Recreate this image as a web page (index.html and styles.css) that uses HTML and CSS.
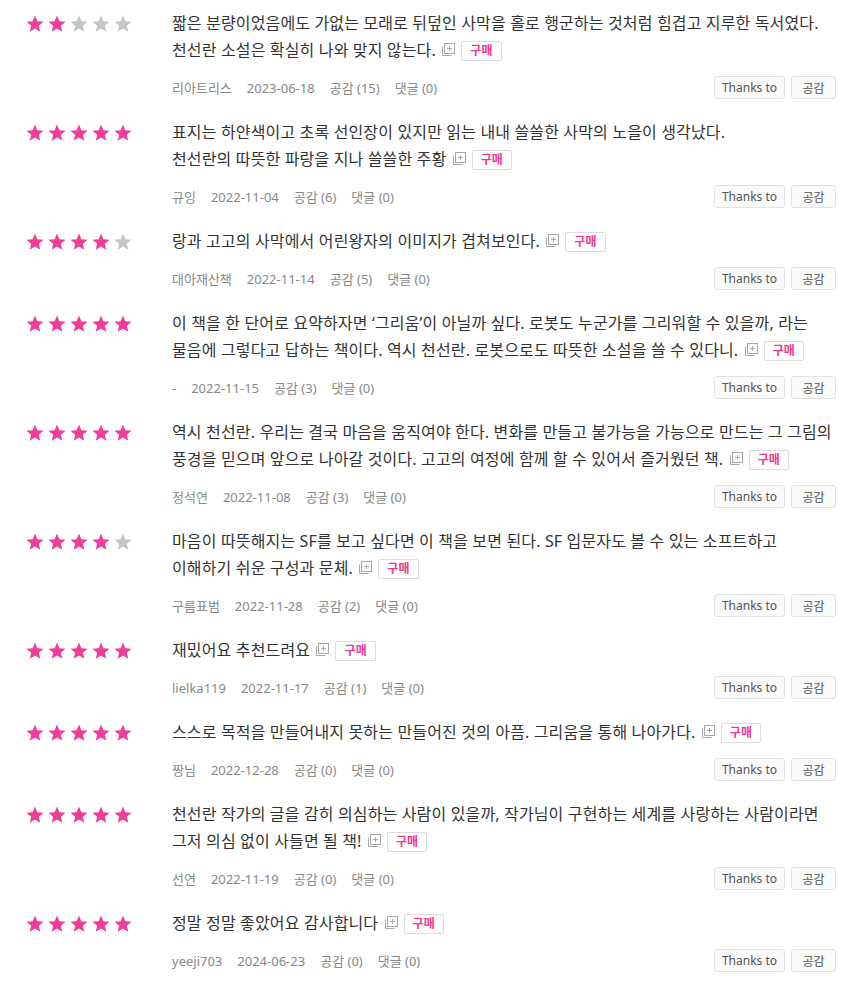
FILE: index.html
```html
<!DOCTYPE html>
<html lang="ko">

    <head>
        <meta charset="UTF-8">
        <meta name="viewport" content="width=device-width, initial-scale=1.0">
        <title>Reviews</title>
        <link rel="stylesheet" href="styles.css">
    </head>

    <body>
        <!-- star / icon sprites -->
        <svg class="sprite">
            <symbol id="star" viewBox="0 0 20 20">
                <polygon points="10,0.5 12.65,6.86 19.51,7.41 14.28,11.89 15.88,18.59 10,15 4.12,18.59 5.72,11.89 0.49,7.41 7.35,6.86" />
            </symbol>
            <symbol id="more" viewBox="0 0 14 14">
                <rect x="3.5" y="0.5" width="10" height="10" fill="none" stroke="currentColor" />
                <path d="M8.5 3v5M6 5.5h5" stroke="currentColor" />
                <path d="M1.5 3.5v9h9" fill="none" stroke="currentColor" />
            </symbol>
        </svg>

        <ul class="reviews">
            <li class="review">
                <div class="stars">
                    <svg class="on"><use href="#star" /></svg><svg class="on"><use href="#star" /></svg><svg><use href="#star" /></svg><svg><use href="#star" /></svg><svg><use href="#star" /></svg>
                </div>
                <div class="body">
                    <p class="text">짧은 분량이었음에도 가없는 모래로 뒤덮인 사막을 홀로 행군하는 것처럼 힘겹고 지루한 독서였다.<br>천선란 소설은 확실히 나와 맞지 않는다. <svg class="more"><use href="#more" /></svg><span class="buy">구매</span></p>
                    <div class="meta">
                        <span>리아트리스</span><span>2023-06-18</span><span>공감 (15)</span><span>댓글 (0)</span>
                        <div class="actions"><button>Thanks to</button><button>공감</button></div>
                    </div>
                </div>
            </li>

            <li class="review">
                <div class="stars">
                    <svg class="on"><use href="#star" /></svg><svg class="on"><use href="#star" /></svg><svg class="on"><use href="#star" /></svg><svg class="on"><use href="#star" /></svg><svg class="on"><use href="#star" /></svg>
                </div>
                <div class="body">
                    <p class="text">표지는 하얀색이고 초록 선인장이 있지만 읽는 내내 쓸쓸한 사막의 노을이 생각났다.<br>천선란의 따뜻한 파랑을 지나 쓸쓸한 주황 <svg class="more"><use href="#more" /></svg><span class="buy">구매</span></p>
                    <div class="meta">
                        <span>규잉</span><span>2022-11-04</span><span>공감 (6)</span><span>댓글 (0)</span>
                        <div class="actions"><button>Thanks to</button><button>공감</button></div>
                    </div>
                </div>
            </li>

            <li class="review">
                <div class="stars">
                    <svg class="on"><use href="#star" /></svg><svg class="on"><use href="#star" /></svg><svg class="on"><use href="#star" /></svg><svg class="on"><use href="#star" /></svg><svg><use href="#star" /></svg>
                </div>
                <div class="body">
                    <p class="text">랑과 고고의 사막에서 어린왕자의 이미지가 겹쳐보인다. <svg class="more"><use href="#more" /></svg><span class="buy">구매</span></p>
                    <div class="meta">
                        <span>대아재산책</span><span>2022-11-14</span><span>공감 (5)</span><span>댓글 (0)</span>
                        <div class="actions"><button>Thanks to</button><button>공감</button></div>
                    </div>
                </div>
            </li>

            <li class="review">
                <div class="stars">
                    <svg class="on"><use href="#star" /></svg><svg class="on"><use href="#star" /></svg><svg class="on"><use href="#star" /></svg><svg class="on"><use href="#star" /></svg><svg class="on"><use href="#star" /></svg>
                </div>
                <div class="body">
                    <p class="text">이 책을 한 단어로 요약하자면 ‘그리움’이 아닐까 싶다. 로봇도 누군가를 그리워할 수 있을까, 라는<br>물음에 그렇다고 답하는 책이다. 역시 천선란. 로봇으로도 따뜻한 소설을 쓸 수 있다니. <svg class="more"><use href="#more" /></svg><span class="buy">구매</span></p>
                    <div class="meta">
                        <span>-</span><span>2022-11-15</span><span>공감 (3)</span><span>댓글 (0)</span>
                        <div class="actions"><button>Thanks to</button><button>공감</button></div>
                    </div>
                </div>
            </li>

            <li class="review">
                <div class="stars">
                    <svg class="on"><use href="#star" /></svg><svg class="on"><use href="#star" /></svg><svg class="on"><use href="#star" /></svg><svg class="on"><use href="#star" /></svg><svg class="on"><use href="#star" /></svg>
                </div>
                <div class="body">
                    <p class="text">역시 천선란. 우리는 결국 마음을 움직여야 한다. 변화를 만들고 불가능을 가능으로 만드는 그 그림의<br>풍경을 믿으며 앞으로 나아갈 것이다. 고고의 여정에 함께 할 수 있어서 즐거웠던 책. <svg class="more"><use href="#more" /></svg><span class="buy">구매</span></p>
                    <div class="meta">
                        <span>정석연</span><span>2022-11-08</span><span>공감 (3)</span><span>댓글 (0)</span>
                        <div class="actions"><button>Thanks to</button><button>공감</button></div>
                    </div>
                </div>
            </li>

            <li class="review">
                <div class="stars">
                    <svg class="on"><use href="#star" /></svg><svg class="on"><use href="#star" /></svg><svg class="on"><use href="#star" /></svg><svg class="on"><use href="#star" /></svg><svg><use href="#star" /></svg>
                </div>
                <div class="body">
                    <p class="text">마음이 따뜻해지는 SF를 보고 싶다면 이 책을 보면 된다. SF 입문자도 볼 수 있는 소프트하고<br>이해하기 쉬운 구성과 문체. <svg class="more"><use href="#more" /></svg><span class="buy">구매</span></p>
                    <div class="meta">
                        <span>구름표범</span><span>2022-11-28</span><span>공감 (2)</span><span>댓글 (0)</span>
                        <div class="actions"><button>Thanks to</button><button>공감</button></div>
                    </div>
                </div>
            </li>

            <li class="review">
                <div class="stars">
                    <svg class="on"><use href="#star" /></svg><svg class="on"><use href="#star" /></svg><svg class="on"><use href="#star" /></svg><svg class="on"><use href="#star" /></svg><svg class="on"><use href="#star" /></svg>
                </div>
                <div class="body">
                    <p class="text">재밌어요 추천드려요 <svg class="more"><use href="#more" /></svg><span class="buy">구매</span></p>
                    <div class="meta">
                        <span>lielka119</span><span>2022-11-17</span><span>공감 (1)</span><span>댓글 (0)</span>
                        <div class="actions"><button>Thanks to</button><button>공감</button></div>
                    </div>
                </div>
            </li>

            <li class="review">
                <div class="stars">
                    <svg class="on"><use href="#star" /></svg><svg class="on"><use href="#star" /></svg><svg class="on"><use href="#star" /></svg><svg class="on"><use href="#star" /></svg><svg class="on"><use href="#star" /></svg>
                </div>
                <div class="body">
                    <p class="text">스스로 목적을 만들어내지 못하는 만들어진 것의 아픔. 그리움을 통해 나아가다. <svg class="more"><use href="#more" /></svg><span class="buy">구매</span></p>
                    <div class="meta">
                        <span>짱님</span><span>2022-12-28</span><span>공감 (0)</span><span>댓글 (0)</span>
                        <div class="actions"><button>Thanks to</button><button>공감</button></div>
                    </div>
                </div>
            </li>

            <li class="review">
                <div class="stars">
                    <svg class="on"><use href="#star" /></svg><svg class="on"><use href="#star" /></svg><svg class="on"><use href="#star" /></svg><svg class="on"><use href="#star" /></svg><svg class="on"><use href="#star" /></svg>
                </div>
                <div class="body">
                    <p class="text">천선란 작가의 글을 감히 의심하는 사람이 있을까, 작가님이 구현하는 세계를 사랑하는 사람이라면<br>그저 의심 없이 사들면 될 책! <svg class="more"><use href="#more" /></svg><span class="buy">구매</span></p>
                    <div class="meta">
                        <span>선연</span><span>2022-11-19</span><span>공감 (0)</span><span>댓글 (0)</span>
                        <div class="actions"><button>Thanks to</button><button>공감</button></div>
                    </div>
                </div>
            </li>

            <li class="review">
                <div class="stars">
                    <svg class="on"><use href="#star" /></svg><svg class="on"><use href="#star" /></svg><svg class="on"><use href="#star" /></svg><svg class="on"><use href="#star" /></svg><svg class="on"><use href="#star" /></svg>
                </div>
                <div class="body">
                    <p class="text">정말 정말 좋았어요 감사합니다 <svg class="more"><use href="#more" /></svg><span class="buy">구매</span></p>
                    <div class="meta">
                        <span>yeeji703</span><span>2024-06-23</span><span>공감 (0)</span><span>댓글 (0)</span>
                        <div class="actions"><button>Thanks to</button><button>공감</button></div>
                    </div>
                </div>
            </li>
        </ul>
    </body>

</html>
```

FILE: styles.css
```css
body {
    margin: 0;
    background-color: #fff;
    font-family: "Noto Sans", "Noto Sans CJK KR", sans-serif;
    color: #333;
}

.sprite {
    position: absolute;
    width: 0;
    height: 0;
    overflow: hidden;
}

.reviews {
    list-style: none;
    margin: 0;
    padding: 0 17px 0 26px;
}

.review {
    display: flex;
    padding: 10px 0;
}

.stars {
    display: flex;
    align-items: center;
    gap: 4px;
    width: 146px;
    height: 27px;
    flex-shrink: 0;
}

.stars svg {
    width: 18px;
    height: 18px;
    fill: #c6c6c6;
}

.stars svg.on {
    fill: #f03d98;
}

.body {
    flex: 1;
}

.text {
    margin: 0;
    font-size: 16px;
    line-height: 27px;
    letter-spacing: 0.15px;
    white-space: nowrap;
}

.more {
    width: 14px;
    height: 14px;
    margin-left: 1px;
    color: #a8a8a8;
    vertical-align: -1px;
}

.buy {
    display: inline-block;
    box-sizing: border-box;
    height: 20px;
    margin-left: 6px;
    padding: 0 8px;
    border: 1px solid #ddd;
    border-radius: 2px;
    font-size: 12px;
    font-weight: bold;
    line-height: 18px;
    color: #f0388f;
    vertical-align: 1px;
}

.meta {
    display: flex;
    align-items: center;
    gap: 15px;
    height: 23px;
    margin-top: 12px;
    font-size: 13px;
    color: #888;
}

.actions {
    display: flex;
    gap: 6px;
    margin-left: auto;
}

button {
    box-sizing: border-box;
    min-width: 45px;
    height: 23px;
    padding: 0 7px;
    background-color: #fafafa;
    border: 1px solid #e2e2e2;
    border-radius: 3px;
    font-family: inherit;
    font-size: 12px;
    color: #555;
}
```
